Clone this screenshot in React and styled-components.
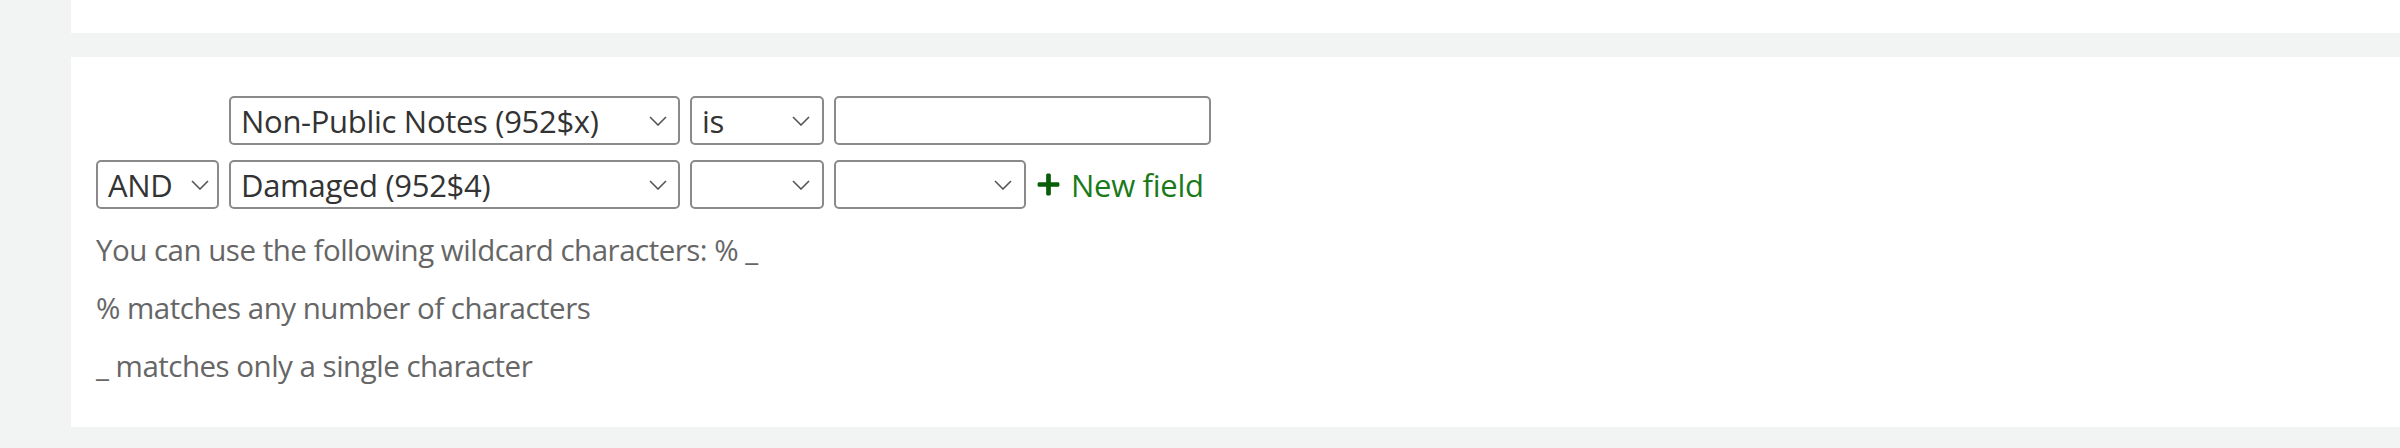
import React from 'react';
import styled, { createGlobalStyle } from 'styled-components';
import { FaPlus } from 'react-icons/fa';

const GlobalStyle = createGlobalStyle`
  html, body {
    margin: 0;
    padding: 0;
    background: #f2f3f3;
    font-family: "Open Sans", "Noto Sans", sans-serif;
  }
`;

const Page = styled.div`
  padding-left: 71px;
  height: 448px;
  display: flex;
  flex-direction: column;
  gap: 24px;
`;

const TopPanel = styled.div`
  background: #fff;
  height: 33px;
`;

const Panel = styled.div`
  background: #fff;
  padding: 39px 25px 32px;
  display: flex;
  flex-direction: column;
`;

const Rows = styled.div`
  display: flex;
  flex-direction: column;
  gap: 15px;
  margin-bottom: 12px;
`;

const Row = styled.div`
  display: flex;
  align-items: center;
  gap: 10px;
`;

const Spacer = styled.div`
  width: ${(p) => p.$w}px;
  flex: none;
`;

const SelectWrap = styled.div`
  position: relative;
  width: ${(p) => p.$w}px;
  height: 49px;
  flex: none;
`;

const Select = styled.select`
  appearance: none;
  box-sizing: border-box;
  width: 100%;
  height: 100%;
  border: 2px solid #8a8a8a;
  border-radius: 5px;
  background: #fff;
  padding: 0 40px 0 10px;
  font-family: "Open Sans", "Noto Sans", sans-serif;
  font-size: 31px;
  letter-spacing: -0.3px;
  color: #333;
  outline: none;
`;

const Chevron = styled.svg`
  position: absolute;
  right: ${(p) => p.$r}px;
  top: 50%;
  transform: translateY(-50%);
  pointer-events: none;
`;

const TextInput = styled.input`
  box-sizing: border-box;
  width: ${(p) => p.$w}px;
  height: 49px;
  border: 2px solid #8a8a8a;
  border-radius: 5px;
  background: #fff;
  outline: none;
  flex: none;
`;

const AddLink = styled.a`
  display: flex;
  align-items: center;
  gap: 10px;
  color: #1a7a1a;
  font-size: 31px;
  letter-spacing: -0.3px;
  text-decoration: none;
  cursor: pointer;

  svg {
    color: #075e07;
    width: 25px;
    height: 25px;
  }
`;

const Note = styled.p`
  margin: 0;
  font-size: 29.5px;
  letter-spacing: -0.5px;
  line-height: 58px;
  color: #666;
`;

function DropDown({ width, value, options = [], right = 14 }) {
  return (
    <SelectWrap $w={width}>
      <Select defaultValue={value}>
        {options.map((o) => (
          <option key={o} value={o}>
            {o}
          </option>
        ))}
      </Select>
      <Chevron $r={right} width="18" height="10" viewBox="0 0 18 10">
        <path d="M1 1l8 8 8-8" fill="none" stroke="#555" strokeWidth="1.6" />
      </Chevron>
    </SelectWrap>
  );
}

const fieldOptions = ['Non-Public Notes (952$x)', 'Damaged (952$4)'];

export default function App() {
  return (
    <>
      <GlobalStyle />
      <Page>
        <TopPanel />
        <Panel>
          <Rows>
            <Row>
              <Spacer $w={123} />
              <DropDown width={451} value="Non-Public Notes (952$x)" options={fieldOptions} right={13} />
              <DropDown width={134} value="is" options={['is', 'is not', 'contains']} />
              <TextInput type="text" $w={377} />
            </Row>
            <Row>
              <DropDown width={123} value="AND" options={['AND', 'OR', 'NOT']} right={10} />
              <DropDown width={451} value="Damaged (952$4)" options={fieldOptions} right={13} />
              <DropDown width={134} value="" options={['', 'is', 'is not']} />
              <DropDown width={192} value="" options={['', 'Yes', 'No']} />
              <AddLink>
                <FaPlus />
                New field
              </AddLink>
            </Row>
          </Rows>
          <Note>You can use the following wildcard characters: % _</Note>
          <Note>% matches any number of characters</Note>
          <Note>_ matches only a single character</Note>
        </Panel>
      </Page>
    </>
  );
}
